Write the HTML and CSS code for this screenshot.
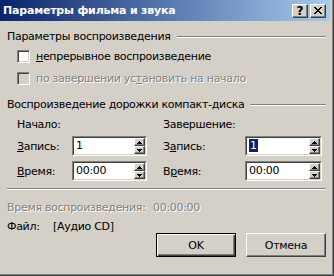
FILE: index.html
```html
<!DOCTYPE html>
<html lang="ru">
<head>
    <meta charset="UTF-8">
    <title>Параметры фильма и звука</title>
    <link rel="stylesheet" href="styles.css">
</head>
<body>
    <div class="window">
        <div class="titlebar">
            <span class="title">Параметры фильма и звука</span>
            <div class="caption-btns">
                <button class="cap help">?</button>
                <button class="cap close">
                    <svg width="8" height="7" viewBox="0 0 8 7" shape-rendering="crispEdges">
                        <path d="M0 0h2v1h-2zM6 0h2v1h-2zM1 1h2v1h-2zM5 1h2v1h-2zM2 2h4v1h-4zM3 3h2v1h-2zM2 4h4v1h-4zM1 5h2v1h-2zM5 5h2v1h-2zM0 6h2v1h-2zM6 6h2v1h-2z" fill="#000"/>
                    </svg>
                </button>
            </div>
        </div>

        <div class="client">
            <div class="group-head">
                <span>Параметры воспроизведения</span>
                <i class="etch"></i>
            </div>
            <div class="check first">
                <span class="box"></span>
                <span><u>н</u>епрерывное воспроизведение</span>
            </div>
            <div class="check second disabled">
                <span class="box"></span>
                <span>по завершении ус<u>т</u>ановить на начало</span>
            </div>

            <div class="group-head cd-head">
                <span>Воспроизведение дорожки компакт-диска</span>
                <i class="etch"></i>
            </div>
            <div class="cd-grid">
                <span class="caption">Начало:</span>
                <span class="caption end-col">Завершение:</span>

                <span><u>З</u>апись:</span>
                <div class="spin">
                    <div class="spin-inner">
                        <span class="field">1</span>
                        <span class="arrows">
                            <span class="arrow"><svg width="5" height="3" viewBox="0 0 5 3" shape-rendering="crispEdges"><path d="M2 0h1v1h-1zM1 1h3v1h-3zM0 2h5v1h-5z"/></svg></span>
                            <span class="arrow"><svg width="5" height="3" viewBox="0 0 5 3" shape-rendering="crispEdges"><path d="M0 0h5v1h-5zM1 1h3v1h-3zM2 2h1v1h-1z"/></svg></span>
                        </span>
                    </div>
                </div>
                <span class="end-col">З<u>а</u>пись:</span>
                <div class="spin">
                    <div class="spin-inner">
                        <span class="field"><span class="sel">1</span></span>
                        <span class="arrows">
                            <span class="arrow"><svg width="5" height="3" viewBox="0 0 5 3" shape-rendering="crispEdges"><path d="M2 0h1v1h-1zM1 1h3v1h-3zM0 2h5v1h-5z"/></svg></span>
                            <span class="arrow"><svg width="5" height="3" viewBox="0 0 5 3" shape-rendering="crispEdges"><path d="M0 0h5v1h-5zM1 1h3v1h-3zM2 2h1v1h-1z"/></svg></span>
                        </span>
                    </div>
                </div>

                <span><u>В</u>ремя:</span>
                <div class="spin">
                    <div class="spin-inner">
                        <span class="field">00:00</span>
                        <span class="arrows">
                            <span class="arrow"><svg width="5" height="3" viewBox="0 0 5 3" shape-rendering="crispEdges"><path d="M2 0h1v1h-1zM1 1h3v1h-3zM0 2h5v1h-5z"/></svg></span>
                            <span class="arrow"><svg width="5" height="3" viewBox="0 0 5 3" shape-rendering="crispEdges"><path d="M0 0h5v1h-5zM1 1h3v1h-3zM2 2h1v1h-1z"/></svg></span>
                        </span>
                    </div>
                </div>
                <span class="end-col">В<u>р</u>емя:</span>
                <div class="spin">
                    <div class="spin-inner">
                        <span class="field">00:00</span>
                        <span class="arrows">
                            <span class="arrow"><svg width="5" height="3" viewBox="0 0 5 3" shape-rendering="crispEdges"><path d="M2 0h1v1h-1zM1 1h3v1h-3zM0 2h5v1h-5z"/></svg></span>
                            <span class="arrow"><svg width="5" height="3" viewBox="0 0 5 3" shape-rendering="crispEdges"><path d="M0 0h5v1h-5zM1 1h3v1h-3zM2 2h1v1h-1z"/></svg></span>
                        </span>
                    </div>
                </div>
            </div>

            <div class="sep"></div>

            <div class="info length disabled">
                <span class="info-label wide">Время воспроизведения:</span>
                <span>00:00:00</span>
            </div>
            <div class="info file">
                <span class="info-label">Файл:</span>
                <span>[Аудио CD]</span>
            </div>

            <div class="buttons">
                <button class="btn default">OK</button>
                <button class="btn">Отмена</button>
            </div>
        </div>
    </div>
</body>
</html>
```

FILE: styles.css
```css
* {
    box-sizing: border-box;
    margin: 0;
    padding: 0;
}

body {
    width: 334px;
    height: 276px;
    overflow: hidden;
    background: #d4d0c8;
    font-family: "DejaVu Sans", sans-serif;
    font-size: 11px;
    line-height: 13px;
    letter-spacing: -0.3px;
    color: #000;
}

u {
    text-decoration: underline;
    text-underline-offset: 1px;
}

/* window frame (left/top edge is cropped off) */
.window {
    display: flex;
    flex-direction: column;
    width: 334px;
    height: 276px;
    padding: 0 3px 2px 0;
    border-right: 1px solid #404040;
    border-bottom: 1px solid #404040;
    box-shadow: inset -1px -1px 0 #808080;
}

.titlebar {
    display: flex;
    align-items: center;
    height: 21px;
    padding: 0 4px 0 3px;
    background: linear-gradient(to right, #0a246a, #a6caf0);
}

.title {
    color: #fff;
    font-weight: bold;
    letter-spacing: -0.2px;
    white-space: nowrap;
}

.caption-btns {
    display: flex;
    gap: 2px;
    margin-left: auto;
}

.cap {
    display: flex;
    align-items: center;
    justify-content: center;
    width: 16px;
    height: 14px;
    background: #d4d0c8;
    border: 1px solid;
    border-color: #fff #404040 #404040 #fff;
    box-shadow: inset -1px -1px 0 #808080;
    font-family: "DejaVu Sans", sans-serif;
    font-size: 12px;
    font-weight: bold;
    line-height: 12px;
    color: #000;
}

.client {
    flex: 1;
    display: flex;
    flex-direction: column;
    padding: 9px 4px 0 7px;
}

.group-head {
    display: flex;
    align-items: center;
    gap: 6px;
    height: 13px;
    white-space: nowrap;
}

.etch {
    flex: 1;
    height: 2px;
    border-top: 1px solid #808080;
    border-bottom: 1px solid #fff;
}

.cd-head {
    margin-top: 13px;
}

.check {
    display: flex;
    align-items: center;
    gap: 6px;
    height: 13px;
    margin-left: 10px;
    white-space: nowrap;
}

.check.first {
    margin-top: 7px;
}

.check.second {
    margin-top: 9px;
}

.box {
    width: 13px;
    height: 13px;
    background: #fff;
    border: 1px solid;
    border-color: #808080 #fff #fff #808080;
    box-shadow: inset 1px 1px 0 #404040, inset -1px -1px 0 #d4d0c8;
}

.disabled {
    color: #808080;
    text-shadow: 1px 1px 0 #fff;
}

.disabled .box {
    background: #d4d0c8;
}

.cd-grid {
    display: grid;
    grid-template-columns: 55px 75px 16px 82px 77px;
    grid-template-rows: 13px 20px 20px;
    row-gap: 5px;
    align-items: center;
    margin-top: 7px;
    padding-left: 10px;
    white-space: nowrap;
}

.cd-grid .caption {
    grid-column: 1 / 3;
}

.cd-grid .end-col {
    grid-column: 4;
}

.cd-grid .caption.end-col {
    grid-column: 4 / 6;
}

.spin {
    height: 20px;
    border: 1px solid;
    border-color: #808080 #fff #fff #808080;
}

.spin-inner {
    display: flex;
    height: 18px;
    background: #fff;
    border: 1px solid;
    border-color: #404040 #d4d0c8 #d4d0c8 #404040;
}

.field {
    flex: 1;
    padding-left: 2px;
    line-height: 16px;
}

.sel {
    display: inline-block;
    padding: 0 1px;
    line-height: 13px;
    background: #0a246a;
    color: #fff;
}

.arrows {
    display: flex;
    flex-direction: column;
    width: 11px;
}

.arrow {
    display: flex;
    align-items: center;
    justify-content: center;
    height: 8px;
    background: #d4d0c8;
    border: 1px solid;
    border-color: #fff #404040 #404040 #fff;
    box-shadow: inset -1px -1px 0 #808080;
}

.arrow svg {
    fill: #000;
}

.sep {
    height: 2px;
    margin-top: 7px;
    border-top: 1px solid #808080;
    border-bottom: 1px solid #fff;
}

.info {
    display: flex;
    height: 13px;
    white-space: nowrap;
}

.info.length {
    margin-top: 11px;
}

.info.file {
    margin-top: 6px;
}

.info-label {
    width: 46px;
}

.info-label.wide {
    width: 146px;
}

.buttons {
    display: flex;
    justify-content: flex-end;
    gap: 10px;
}

.btn {
    width: 80px;
    height: 24px;
    background: #d4d0c8;
    border: 1px solid;
    border-color: #fff #404040 #404040 #fff;
    box-shadow: inset -1px -1px 0 #808080;
    font-family: "DejaVu Sans", sans-serif;
    font-size: 11px;
    letter-spacing: -0.3px;
    color: #000;
}

.btn.default {
    border-color: #000;
    box-shadow: inset 1px 1px 0 #fff, inset -1px -1px 0 #404040, inset -2px -2px 0 #808080;
}
```
